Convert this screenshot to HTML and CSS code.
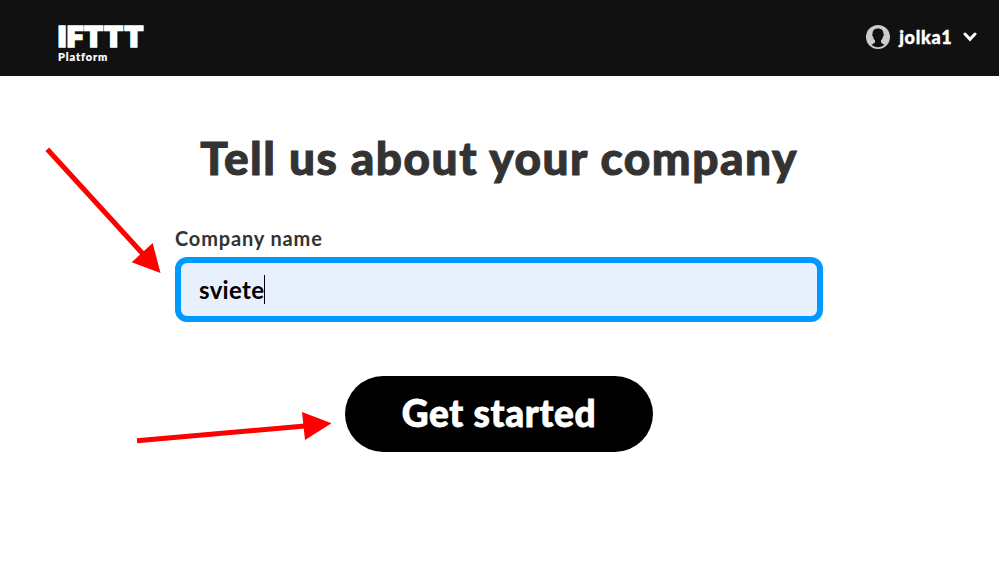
FILE: index.html
```html
<!DOCTYPE html>
<html lang="en">
<head>
<meta charset="utf-8">
<title>IFTTT Platform</title>
<link rel="stylesheet" href="styles.css">
</head>
<body>
<header class="topbar">
  <a class="brand">
    <span class="brand-name">IFTTT</span>
    <span class="brand-sub">Platform</span>
  </a>
  <div class="account">
    <svg class="avatar" viewBox="0 0 24 24">
      <circle cx="12" cy="12" r="12" fill="#ccc"/>
      <path fill="#111" d="M12 3.500c-3.700 0-5.600 2.200-5.400 5.300-.7.400-.4 2.400.5 2.900.3 1.700 1 2.800 1.900 3.600v1.900c-.8 1.300-2.400 1.600-3.500 2.600 1.700 1.700 4 2.400 6.500 2.400s4.800-.7 6.500-2.400c-1.100-1-2.700-1.300-3.500-2.600v-1.900c.9-.8 1.600-1.900 1.900-3.600.9-.5 1.200-2.500.5-2.900.2-3.100-1.700-5.300-5.400-5.300z"/>
    </svg>
    <span class="user">jolka1</span>
    <svg class="chevron" viewBox="0 0 14 10"><path d="M2 2l5 5.300L12 2" fill="none" stroke="#fff" stroke-width="3" stroke-linecap="round"/></svg>
  </div>
</header>
<main class="content">
  <h1 class="title">Tell us about your company</h1>
  <form class="form">
    <label class="label">Company name</label>
    <div class="field"><span class="value">sviete</span><span class="caret"></span></div>
    <button class="submit" type="button">Get started</button>
  </form>
</main>
<svg class="arrows" viewBox="0 0 999 565">
  <g fill="none" stroke="#f00" stroke-width="5">
    <path d="M47.300 149.200L143 254"/>
    <path d="M137 440.700L305 426"/>
  </g>
  <path fill="#f00" d="M160.500 273L152.700 243L131.700 262.200zM331.500 423.300L302 412L305 440z"/>
</svg>
</body>
</html>
```

FILE: styles.css
```css
* { box-sizing: border-box; }
body {
  margin: 0;
  height: 565px;
  overflow: hidden;
  background: #fff;
  color: #333;
  font-family: Lato, "Open Sans", sans-serif;
}
.topbar {
  display: flex;
  justify-content: space-between;
  height: 76px;
  padding: 0 22.500px 0 58px;
  background: #111;
  color: #fff;
}
.brand { display: flex; flex-direction: column; padding-top: 26px; }
.brand-name {
  height: 22px;
  font: 900 28px/22px Inter, sans-serif;
  letter-spacing: .8px;
  -webkit-text-stroke: 1.700px #fff;
}
.brand-sub {
  font-size: 11px;
  line-height: 18px;
  font-weight: 900;
  letter-spacing: .9px;
  -webkit-text-stroke: .2px #fff;
}
.account { display: flex; align-items: center; height: 74px; }
.avatar { width: 24px; height: 24px; }
.user {
  margin-left: 9px;
  font-size: 18px;
  font-weight: 900;
  letter-spacing: .7px;
  -webkit-text-stroke: .4px #fff;
}
.chevron { width: 14px; height: 10px; margin-left: 10px; }
.content { display: flex; flex-direction: column; width: 998px; align-items: center; }
.title {
  margin: 53px 0 0;
  font-size: 46px;
  line-height: 58px;
  font-weight: 900;
  letter-spacing: 1.5px;
  white-space: nowrap;
  -webkit-text-stroke: 1px #333;
}
.form { display: flex; flex-direction: column; width: 648px; margin-top: 38px; }
.label { font-size: 20px; line-height: 26px; font-weight: 700; letter-spacing: .85px; }
.field {
  display: flex;
  align-items: center;
  height: 65px;
  margin-top: 6px;
  padding: 0 18px;
  border: 6px solid #09f;
  border-radius: 12px;
  background: #e8f0fe;
  color: #000;
}
.value { font-size: 24px; line-height: 30px; font-weight: 700; letter-spacing: .3px; }
.caret { width: 1px; height: 29px; background: #000; }
.submit {
  align-self: center;
  width: 308px;
  height: 76px;
  margin-top: 54px;
  padding: 0 0 2px;
  border: 0;
  border-radius: 38px;
  background: #000;
  color: #fff;
  font: 900 37px/74px Lato, sans-serif;
  letter-spacing: .7px;
  -webkit-text-stroke: .8px #fff;
  white-space: nowrap;
}
.arrows { position: absolute; top: 0; left: 0; width: 999px; height: 565px; pointer-events: none; }
```
